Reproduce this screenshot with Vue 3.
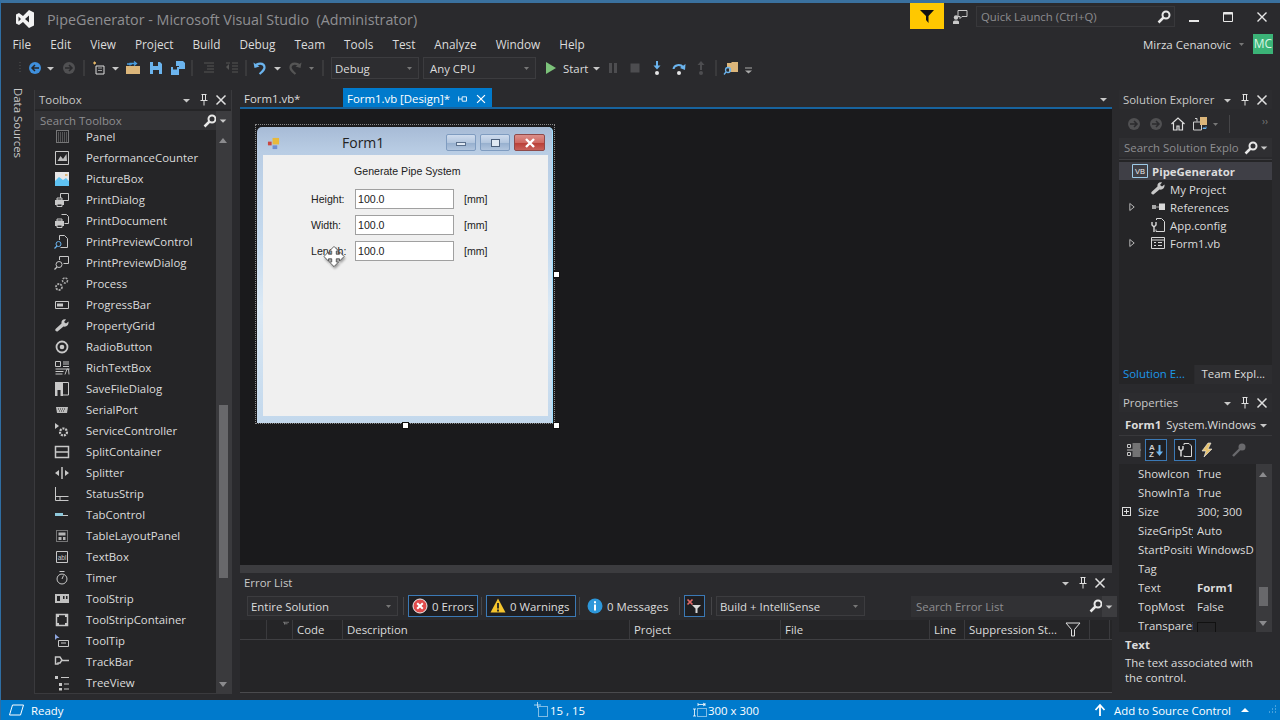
<script setup>
// icon bodies, all on a 16x16 box; stroke and fill come from the .ic rule unless set here
const icons = {
  caret: '<path d="M4 7h7l-3.5 3.5z" fill="#c8c8c8" stroke="none"/>',
  caretDim: '<path d="M5 7h5l-2.5 3z" fill="#777" stroke="none"/>',
  pin: '<path d="M5.5 2.5h5M6.5 2.5v6h3v-6M4.500 8.500h7M8 8.500v5" stroke="#e0e0e0"/>',
  close: '<path d="M3.500 3.500l9 9M12.500 3.500l-9 9" stroke="#e0e0e0" stroke-width="1.500"/>',
  search: '<circle cx="10" cy="6" r="3.500" stroke="#e8e8e8" stroke-width="2"/><path d="M7.500 8.500L2.500 13.500" stroke="#e8e8e8" stroke-width="2.500"/>',
  grip: '<path d="M8 2v12" stroke="#555" stroke-dasharray="1 2"/>',
  sep: '<path d="M8 0v16" stroke="#4a4a4d"/>',
  back: '<circle cx="8" cy="8" r="6" fill="#3f8fdc" stroke="none"/><path d="M12 8H5M8 5L5 8l3 3" stroke="#252526" stroke-width="1.500"/>',
  fwd: '<circle cx="8" cy="8" r="6" fill="#505052" stroke="none"/><path d="M4 8h7M8 5l3 3-3 3" stroke="#2b2b2e" stroke-width="1.500"/>',
  newProj: '<path d="M5 6h8v8H5z" stroke="#ddd"/><path d="M2 3h3M3.500 1.500v3M3 2l1.500 2M4.500 2L3 4" stroke="#e6b866"/><path d="M7 8h4M7 10.500h4" stroke="#999"/>',
  open: '<path d="M1 6h14v8H1z" fill="#dcb67a" stroke="none"/><path d="M2 4h5M9 1.500l2.500 2-2.500 2M11 3.500H5v2" stroke="#4a9ee0" stroke-width="1.300"/>',
  save: '<path d="M2 2h10l2 2v10H2z" fill="#6bb4ee" stroke="none"/><path d="M5 2h5v4H5z" fill="#2b2b2e" stroke="none"/><path d="M5 10h6v4H5z" fill="#2b2b2e" stroke="none"/>',
  saveAll: '<path d="M6 1h7l2 2v6H9V6H6z" fill="#6bb4ee" stroke="none"/><path d="M1 7h8v8H1z" fill="#6bb4ee" stroke="none"/><path d="M3 7h4v2.500H3z" fill="#2b2b2e" stroke="none"/>',
  indent: '<path d="M4 3h10M7 6h7M7 9h7M4 12h10" stroke="#555"/>',
  outdent: '<path d="M2 3h4M8 3h6M8 6h6M8 9h6M8 12h6" stroke="#555"/><path d="M2 7l3-3v6z" fill="#555" stroke="none"/>',
  undo: '<path d="M3.500 6C5 3 12 2.500 12.500 7c.3 3-2 4.500-5 7" stroke="#6bb4ee" stroke-width="2.200"/><path d="M1.500 2.500l1 5.500 5-1.500z" fill="#6bb4ee" stroke="none"/>',
  redo: '<path d="M12.500 6C11 3 4 2.500 3.500 7c-.3 3 2 4.500 5 7" stroke="#555" stroke-width="2.200"/><path d="M14.500 2.500l-1 5.500-5-1.500z" fill="#555" stroke="none"/>',
  play: '<path d="M3 2l10 6-10 6z" fill="#7cc27a" stroke="none"/>',
  pause: '<path d="M4 3h3v10H4zM9 3h3v10H9z" fill="#4d4d50" stroke="none"/>',
  stop: '<path d="M3.500 3.500h9v9h-9z" fill="#4d4d50" stroke="none"/>',
  stepInto: '<circle cx="8" cy="13" r="2" fill="#e6e6e6" stroke="none"/><path d="M8 1v6" stroke="#6bb4ee" stroke-width="2"/><path d="M4.500 5.500L8 9.500l3.500-4z" fill="#6bb4ee" stroke="none"/>',
  stepOver: '<circle cx="8" cy="13" r="2" fill="#e6e6e6" stroke="none"/><path d="M2.500 9C3 4.500 9.500 4 12 7" stroke="#6bb4ee" stroke-width="2"/><path d="M14.500 4l-.5 6-5-2z" fill="#6bb4ee" stroke="none"/>',
  stepOut: '<circle cx="8" cy="13" r="2" fill="#4d4d50" stroke="none"/><path d="M8 10V4" stroke="#4d4d50" stroke-width="2"/><path d="M4.500 5L8 1l3.500 4z" fill="#4d4d50" stroke="none"/>',
  findFiles: '<path d="M4 3h4l1-1h6v10H6V8H4z" fill="#dcb67a" stroke="none"/><circle cx="5" cy="10" r="2.500" stroke="#6bb4ee" stroke-width="1.300"/><path d="M3 12l-2 2.500" stroke="#6bb4ee" stroke-width="1.300"/>',
  overflow: '<path d="M4 8h7" stroke="#aaa"/><path d="M4 10.500h7l-3.500 3z" fill="#aaa" stroke="none"/>',
  // toolbox
  panel: '<path d="M2.500 1.500h12v12h-12z" stroke-dasharray="1 1"/><path d="M4 4h9M4 6h9M4 8h9M4 10h9M4 12h9" stroke="#888" stroke-dasharray="1 1"/>',
  perf: '<path d="M1.500 1.500h13v13h-13z"/><path d="M3.500 11l3-5 2.500 3 3.500-5 .5 7z" fill="#bbb" stroke="none"/>',
  picture: '<path d="M1 1h14v14H1z" fill="#e6e6e6" stroke="none"/><path d="M1 10l4-4 4 3 3-2 3 3v5H1z" fill="#5ec2f2" stroke="none"/><path d="M11 3h2.500v2H11z" fill="#dcb67a" stroke="none"/>',
  printDlg: '<path d="M6.500 1.500h8v7h-5l-1 1h-2z"/><path d="M1 8h9v5H1z" fill="#c8c8c8" stroke="none"/><path d="M3 6h5v2H3zM3 12h5v2.500H3z" fill="#252527" stroke="#c8c8c8"/>',
  printDoc: '<path d="M7.500 1.500h5l2 2v7h-4"/><path d="M1 8h9v5H1z" fill="#c8c8c8" stroke="none"/><path d="M3 6h5v2H3zM3 12h5v2.500H3z" fill="#252527" stroke="#c8c8c8"/>',
  previewCtl: '<path d="M5.500 6V1.500h5l3 3v9h-7"/><circle cx="4.500" cy="10" r="2.500" stroke="#6bb4ee"/><path d="M3 12l-2.500 2.500" stroke="#6bb4ee" stroke-width="1.300"/>',
  previewDlg: '<path d="M5.500 5V1.500h9v7h-5"/><circle cx="5" cy="9.500" r="3"/><path d="M3 12l-2.500 2.500" stroke-width="1.300"/>',
  process: '<circle cx="11" cy="4.500" r="2.500" stroke="#aaa" stroke-width="1.500" stroke-dasharray="2 1"/><circle cx="5" cy="11" r="3" stroke="#aaa" stroke-width="1.800" stroke-dasharray="2 1"/>',
  progress: '<path d="M1.500 4.500h13v7h-13z"/><path d="M3 6.500h6v3H3z" fill="#c8c8c8" stroke="none"/>',
  wrench: '<path d="M14.500 3.500l-2.500 2-2-1.500 2-2.500c-3-.8-5 1.500-4.500 4L1.500 11c-1 1.500 1 3 2.300 2.300L9.500 8.500c2.800.8 5.500-1.500 5-5z" fill="#c8c8c8" stroke="none"/>',
  radio: '<circle cx="8" cy="8" r="5.500" stroke-width="1.800"/><circle cx="8" cy="8" r="2.300" fill="#c8c8c8" stroke="none"/>',
  rich: '<path d="M1.500 1.500h5v5h-5zM9 2h6M9 4h6M9 6.500h6M1.500 9h14M1.500 11.500h8M1.500 14h7"/><path d="M11 14.500L13 9h1.500l.5 5.500" stroke="#bbb"/>',
  saveDlg: '<path d="M1.500 1.500h13v12.500H9"/><path d="M1 1h8v14H1z" fill="#c8c8c8" stroke="none"/><path d="M3.500 9h3v6h-3z" fill="#252527" stroke="none"/>',
  serial: '<path d="M2 5h12l-1 6H3z" fill="#bdbdbd" stroke="none"/><path d="M4 7h8M5 9h6" stroke="#333" stroke-dasharray="1 1"/>',
  service: '<path d="M1 0v6l4-3z" fill="#c8c8c8" stroke="none"/><circle cx="9.500" cy="9" r="3.500" stroke-width="2.200" stroke-dasharray="2 1"/>',
  split: '<path d="M1.500 2.500h13v11h-13zM1.500 8h13" stroke-width="1.500"/>',
  splitter: '<path d="M8 2v12" stroke-width="1.500"/><path d="M1 8l4-3v6zM15 8l-4-3v6z" fill="#c8c8c8" stroke="none"/>',
  strip: '<path d="M1.500 1v13.500h13M1.500 10.500h13M6 10.500v4"/>',
  tab: '<path d="M1 6h8v3H1z" fill="#8fc9dc" stroke="none"/><path d="M9 8.500h5" stroke="#c8c8c8"/>',
  tlp: '<path d="M2.500 2.500h11v11h-11z" stroke-dasharray="1 1"/><path d="M4.500 4.500h7v3h-7zM4.500 9h3v3h-3zM9 9h2.500v3H9z" fill="#b5b5b5" stroke="none"/>',
  textbox: '<path d="M2.500 2.500h11v11h-11z"/><text x="8" y="10.500" font-size="6.500" text-anchor="middle" font-family="Liberation Sans" fill="#c8c8c8" stroke="none">abl</text>',
  timer: '<circle cx="8" cy="9" r="5"/><path d="M5.500 1.500h5M8 9l1.500-3.500"/>',
  toolstrip: '<path d="M1 3h14v9H1z" fill="#c0c0c0" stroke="none"/><path d="M3 5h3v5H3zM9 5h1.500v3H9zM12 5h1.500v3H12z" fill="#252527" stroke="none"/>',
  tsc: '<path d="M2.500 2.500h11v11h-11z" stroke-width="1.500"/><path d="M5 5h6v6H5z" fill="#252527" stroke="none"/><path d="M2 2h3v3H2zM11 2h3v3h-3zM2 11h3v3H2zM11 11h3v3h-3z" fill="#c8c8c8" stroke="none"/>',
  tooltip: '<path d="M1 1l4.500 4H3l-2 2z" fill="#8fa7e0" stroke="none"/><path d="M4.500 7.500h10v6h-10zM7 10h5"/>',
  trackbar: '<path d="M1.500 3h4.500l2 3-2 3H4v1H1.500zM8 6.500h7" stroke-width="1.400"/>',
  tree: '<path d="M1 1h3v3H1zM5 8h3v3H5zM5 13h3v2.500H5z" fill="#c8c8c8" stroke="none"/><path d="M7 2.500h8M10 9h5M10 14h5"/>',
  // solution explorer
  home: '<path d="M1.500 8L8 2l6.500 6M3.500 7v7h3.500v-4h2v4h3.500V7" stroke="#e0e0e0" stroke-width="1.200"/>',
  sync: '<path d="M1.500 6h8v8h-8z" stroke="#d0d0d0"/><path d="M3 2.500h2v3" stroke="#d0d0d0"/><path d="M8 1h7v8H8z" fill="#dcb67a" stroke="none"/><path d="M11 12.500h3v-2M11 12.500l1.500-1.500" stroke="#6bb4ee"/>',
  vb: '<path d="M.500 1.500h15v13H.500z" stroke="#9ecbe8"/><text x="8" y="11" font-size="7.500" text-anchor="middle" font-family="Liberation Sans" fill="#e8e8e8" stroke="none">VB</text>',
  refs: '<path d="M2 6h4v4H2z" fill="#a8a8a8" stroke="none"/><path d="M9 4.500h6v6.500H9z" fill="#d8d8d8" stroke="none"/><path d="M6 8h3" stroke="#aaa"/>',
  config: '<path d="M6.500 3V1.500h5l3 3v10H6v-2" stroke="#d8d8d8"/><path d="M2 5v3l2 2 2-2V5M4 10v5" stroke="#d8d8d8" stroke-width="1.400"/>',
  form: '<path d="M1.500 2.500h13v11h-13zM1.500 5h13" stroke="#d8d8d8"/><path d="M4 7.500h2M8 7.500h4M4 10.500h2M8 10.500h4" stroke="#d8d8d8"/>',
  expand: '<path d="M5.500 4l5 4-5 4z" stroke="#c8c8c8"/>',
  // properties
  categorized: '<path d="M1.500 2.500h3v3h-3zM1.500 10.500h3v3h-3z"/><path d="M6.500 2h8M6.500 4h8M6.500 6h8M1 8h14M6.500 10h8M6.500 12h8M6.500 14h8" stroke="#bbb"/>',
  alpha: '<text x="1" y="7.500" font-size="8" font-weight="700" font-family="Liberation Sans" fill="#d0d0d0" stroke="none">A</text><text x="1" y="15" font-size="8" font-weight="700" font-family="Liberation Sans" fill="#d0d0d0" stroke="none">Z</text><path d="M11.500 3v8" stroke="#6bb4ee" stroke-width="2"/><path d="M8 9.500h7l-3.500 4.500z" fill="#6bb4ee" stroke="none"/>',
  propPage: '<path d="M7 3V1.500h5l2.500 2.500v10.500H7v-1" stroke="#d8d8d8"/><path d="M2 4v3l2 2 2-2V4M4 9v5.500" stroke="#d8d8d8" stroke-width="1.500"/>',
  bolt: '<path d="M9 1L3 9h4l-2 6 8-8H9l3-6z" fill="#e6c26e" stroke="#eee" stroke-width=".6"/>',
  key: '<circle cx="11" cy="5" r="3.500" fill="#6a6a6d" stroke="none"/><path d="M9 7l-7 7" stroke="#6a6a6d" stroke-width="2.400"/>',
  // error list
  err: '<circle cx="8" cy="8" r="7" fill="#e14b4b" stroke="#eee"/><path d="M5.200 5.200l5.600 5.600M10.800 5.200l-5.600 5.600" stroke="#fff" stroke-width="2"/>',
  warn: '<path d="M8 .5L15.500 14.500H.5z" fill="#f6c52d" stroke="none"/><path d="M8 5v5.500M8 11.500v2" stroke="#222" stroke-width="1.800"/>',
  info: '<circle cx="8" cy="8" r="7.500" fill="#2d97da" stroke="none"/><path d="M8 6.500v6M8 3.300v2" stroke="#fff" stroke-width="2"/>',
  filterX: '<path d="M1.500 1.500l5 5M6.500 1.500l-5 5" stroke="#e06a6a" stroke-width="1.700"/><path d="M6 7h9l-3.500 3.500V15h-2v-4.500z" fill="#d8d8d8" stroke="none"/>',
  funnel: '<path d="M1 2h14l-5.500 6.500V15h-3V8.500z" stroke="#e0e0e0"/>',
  sortMark: '<path d="M4 3h8M6 5h4M6 3v3" stroke="#888"/>',
  // chrome
  feedback: '<path d="M6 1.500h9v6H10l-2 2V7.500H6z" stroke="#c8c8c8"/><circle cx="4" cy="8.500" r="2.200" fill="#c8c8c8" stroke="none"/><path d="M1 15v-2.500l1.500-1h3l1.500 1V15z" fill="#c8c8c8" stroke="none"/>',
  winMin: '<path d="M3 12h10" stroke="#e8e8e8" stroke-width="2"/>',
  winMax: '<path d="M3.500 3.500h9v9h-9z" stroke="#e8e8e8"/><path d="M3.500 4.500h9" stroke="#e8e8e8" stroke-width="2"/>',
  winClose: '<path d="M3.500 3.500l9 9M12.500 3.500l-9 9" stroke="#e8e8e8" stroke-width="1.400"/>',
  // status bar
  ready: '<path d="M4.500 3h11l-3 10H1.500z" stroke="#fff"/>',
  pos: '<path d="M0 3h7M3.500 0v6" stroke="#cfe6f7" stroke-width=".8"/><path d="M4.500 4.500h9v10h-9z" stroke="#fff" stroke-dasharray="1 1"/>',
  size: '<path d="M6 1v3M6 2.500h7M13 1v3M11 1l2 1.500L11 4M1 7h3M2.500 7v7M1 14h3" stroke="#fff" stroke-width=".8"/><path d="M5.500 6.500h9v8h-9z" stroke="#fff" stroke-dasharray="1 1"/>',
  up: '<path d="M8 14V4M3.500 8L8 3l4.500 5" stroke="#fff" stroke-width="1.800"/>',
  caretUp: '<path d="M4 10h8L8 6z" fill="#fff" stroke="none"/>',
  resize: '<path d="M13 4h1M10 7h1M13 7h1M7 10h1M10 10h1M13 10h1" stroke="#8fc8ec"/>',
}

// toolbar slots: widths come from the gaps between the icons in the main toolbar
const toolbarLeft = [
  { i: 'grip', w: 12 }, { i: 'back', w: 18 }, { i: 'caret', w: 14 }, { i: 'fwd', w: 22 }, { i: 'sep', w: 8 },
  { i: 'newProj', w: 22 }, { i: 'caret', w: 12 }, { i: 'open', w: 22 }, { i: 'save', w: 24 }, { i: 'saveAll', w: 20 },
  { i: 'sep', w: 8 }, { i: 'indent', w: 24 }, { i: 'outdent', w: 24 }, { i: 'sep', w: 4 }, { i: 'undo', w: 24 },
  { i: 'caret', w: 12 }, { i: 'redo', w: 22 }, { i: 'caretDim', w: 12 }, { i: 'sep', w: 10 },
]
const toolbarRight = [
  { i: 'caret', w: 12 }, { i: 'pause', w: 20 }, { i: 'stop', w: 24 }, { i: 'stepInto', w: 20 }, { i: 'stepOver', w: 24 },
  { i: 'stepOut', w: 20 }, { i: 'sep', w: 10 }, { i: 'findFiles', w: 20 }, { i: 'overflow', w: 16 },
]

const menu = ['File', 'Edit', 'View', 'Project', 'Build', 'Debug', 'Team', 'Tools', 'Test', 'Analyze', 'Window', 'Help']

const toolbox = [
  ['Panel', 'panel'], ['PerformanceCounter', 'perf'], ['PictureBox', 'picture'], ['PrintDialog', 'printDlg'],
  ['PrintDocument', 'printDoc'], ['PrintPreviewControl', 'previewCtl'], ['PrintPreviewDialog', 'previewDlg'],
  ['Process', 'process'], ['ProgressBar', 'progress'], ['PropertyGrid', 'wrench'], ['RadioButton', 'radio'],
  ['RichTextBox', 'rich'], ['SaveFileDialog', 'saveDlg'], ['SerialPort', 'serial'], ['ServiceController', 'service'],
  ['SplitContainer', 'split'], ['Splitter', 'splitter'], ['StatusStrip', 'strip'], ['TabControl', 'tab'],
  ['TableLayoutPanel', 'tlp'], ['TextBox', 'textbox'], ['Timer', 'timer'], ['ToolStrip', 'toolstrip'],
  ['ToolStripContainer', 'tsc'], ['ToolTip', 'tooltip'], ['TrackBar', 'trackbar'], ['TreeView', 'tree'],
]

const tree = [
  { label: 'My Project', icon: 'wrench' },
  { label: 'References', icon: 'refs', expand: true },
  { label: 'App.config', icon: 'config' },
  { label: 'Form1.vb', icon: 'form', expand: true },
]

// names and values as far as the narrow property grid shows them
const props = [
  { name: 'ShowIcon', value: 'True' },
  { name: 'ShowInTa', value: 'True' },
  { name: 'Size', value: '300; 300', plus: true },
  { name: 'SizeGripSty', value: 'Auto' },
  { name: 'StartPositi', value: 'WindowsD' },
  { name: 'Tag', value: '' },
  { name: 'Text', value: 'Form1', bold: true },
  { name: 'TopMost', value: 'False' },
  { name: 'Transparei', value: '', swatch: true },
]

const fields = ['Height:', 'Width:', 'Length:']
const columns = ['', '', 'Code', 'Description', 'Project', 'File', 'Line', 'Suppression St...', '']
</script>

<template>
  <div class="vs">
    <header class="titlebar">
      <svg class="logo" viewBox="0 0 20 20">
        <path d="M14 1l5 2.500v13L14 19 8 13l-4 3-3-1.500v-9L4 4l4 3zM14 6.500L10 10l4 3.500zM3.500 7.500v5L6 10z" fill="#f2f2f2" />
      </svg>
      <span class="app-title">PipeGenerator - Microsoft Visual Studio&nbsp; (Administrator)</span>
      <div class="flag">
        <svg viewBox="0 0 16 16"><path d="M1 2h14L9.500 8v7L7 12V8z" fill="#111" /></svg>
      </div>
      <svg class="ic feedback" viewBox="0 0 16 16" v-html="icons.feedback"></svg>
      <div class="quick">
        <span>Quick Launch (Ctrl+Q)</span>
        <svg class="ic" viewBox="0 0 16 16" v-html="icons.search"></svg>
      </div>
      <div class="win-btns">
        <svg class="ic" viewBox="0 0 16 16" v-html="icons.winMin"></svg>
        <svg class="ic" viewBox="0 0 16 16" v-html="icons.winMax"></svg>
        <svg class="ic" viewBox="0 0 16 16" v-html="icons.winClose"></svg>
      </div>
    </header>

    <nav class="menubar">
      <span v-for="m in menu" :key="m" class="menu-item">{{ m }}</span>
      <span class="user">Mirza Cenanovic</span>
      <svg class="ic user-caret" viewBox="0 0 16 16" v-html="icons.caretDim"></svg>
      <span class="avatar">MC</span>
    </nav>

    <div class="toolbar">
      <span v-for="(t, n) in toolbarLeft" :key="n" class="slot" :style="{ width: t.w + 'px' }">
        <svg class="ic" viewBox="0 0 16 16" v-html="icons[t.i]"></svg>
      </span>
      <div class="combo combo-debug"><span>Debug</span><svg class="ic" viewBox="0 0 16 16" v-html="icons.caretDim"></svg></div>
      <div class="combo combo-cpu"><span>Any CPU</span><svg class="ic" viewBox="0 0 16 16" v-html="icons.caretDim"></svg></div>
      <span class="slot start-icon"><svg class="ic" viewBox="0 0 16 16" v-html="icons.play"></svg></span>
      <span class="start">Start</span>
      <span v-for="(t, n) in toolbarRight" :key="'r' + n" class="slot" :style="{ width: t.w + 'px' }">
        <svg class="ic" viewBox="0 0 16 16" v-html="icons[t.i]"></svg>
      </span>
    </div>

    <main class="workspace">
      <div class="side-strip"><span>Data Sources</span></div>

      <section class="toolbox">
        <div class="tw-head">
          <span class="tw-title">Toolbox</span>
          <span class="dots"></span>
          <svg class="ic" viewBox="0 0 16 16" v-html="icons.caret"></svg>
          <svg class="ic" viewBox="0 0 16 16" v-html="icons.pin"></svg>
          <svg class="ic" viewBox="0 0 16 16" v-html="icons.close"></svg>
        </div>
        <div class="search">
          <span class="search-text">Search Toolbox</span>
          <svg class="ic search-glass" viewBox="0 0 16 16" v-html="icons.search"></svg>
          <svg class="ic search-caret" viewBox="0 0 16 16" v-html="icons.caret"></svg>
        </div>
        <div class="toolbox-body">
          <ul class="toolbox-list">
            <li v-for="[label, icon] in toolbox" :key="label">
              <svg class="ic" viewBox="0 0 16 16" v-html="icons[icon]"></svg>
              <span>{{ label }}</span>
            </li>
          </ul>
          <div class="scroll scroll-toolbox"><i class="arrow-up"></i><b></b><i class="arrow-down"></i></div>
        </div>
      </section>

      <section class="center">
        <div class="tabs">
          <span class="tab">Form1.vb*</span>
          <span class="tab tab-active">
            Form1.vb [Design]*
            <svg class="ic tab-pin" viewBox="0 0 16 16"><path d="M3 5v6M3 8h4M7 5.500h5v5H7z" stroke="#fff" /></svg>
            <svg class="ic" viewBox="0 0 16 16"><path d="M3.500 3.500l9 9M12.500 3.500l-9 9" stroke="#fff" stroke-width="1.400" /></svg>
          </span>
          <svg class="ic tabs-caret" viewBox="0 0 16 16" v-html="icons.caret"></svg>
        </div>

        <div class="designer">
          <div class="selection"></div>
          <div class="form">
            <div class="form-title">
              <svg class="form-icon" viewBox="0 0 14 14">
                <path d="M6 1h7v7H6z" fill="#e8b93a" />
                <path d="M1 5h4v4H1z" fill="#c9473f" />
                <path d="M6 9h5v4H6z" fill="#6f8fd0" />
              </svg>
              <span class="form-name">Form1</span>
              <span class="cap-btn"><i class="cap-min"></i></span>
              <span class="cap-btn"><i class="cap-max"></i></span>
              <span class="cap-btn cap-close">
                <svg viewBox="0 0 16 12"><path d="M4 2l8 8M12 2l-8 8" stroke="#fff" stroke-width="2.400" fill="none" /></svg>
              </span>
            </div>
            <div class="form-client">
              <div class="form-heading">Generate Pipe System</div>
              <div class="form-fields">
                <template v-for="f in fields" :key="f">
                  <label>{{ f }}</label>
                  <span class="win-input">100.0</span>
                  <span>[mm]</span>
                </template>
              </div>
            </div>
          </div>
          <i class="handle h-right"></i>
          <i class="handle h-bottom"></i>
          <i class="handle h-corner"></i>
          <svg class="cursor" viewBox="0 0 24 24">
            <path d="M12 1L17 6H14.500V9.500H18V7L23 12L18 17V14.500H14.500V18H17L12 23L7 18H9.500V14.500H6V17L1 12L6 7V9.500H9.500V6H7Z" fill="#fff" stroke="#555" stroke-width="1" />
          </svg>
        </div>

        <div class="splitter"></div>

        <section class="errors">
          <div class="tw-head err-head">
            <span class="tw-title">Error List</span>
            <span class="dots"></span>
            <svg class="ic" viewBox="0 0 16 16" v-html="icons.caret"></svg>
            <svg class="ic" viewBox="0 0 16 16" v-html="icons.pin"></svg>
            <svg class="ic" viewBox="0 0 16 16" v-html="icons.close"></svg>
          </div>
          <div class="err-tools">
            <div class="combo combo-scope"><span>Entire Solution</span><svg class="ic" viewBox="0 0 16 16" v-html="icons.caretDim"></svg></div>
            <i class="vsep"></i>
            <span class="err-btn on btn-errors"><svg class="ic" viewBox="0 0 16 16" v-html="icons.err"></svg>0 Errors</span>
            <i class="vsep"></i>
            <span class="err-btn on btn-warnings"><svg class="ic" viewBox="0 0 16 16" v-html="icons.warn"></svg>0 Warnings</span>
            <i class="vsep"></i>
            <span class="err-btn btn-messages"><svg class="ic" viewBox="0 0 16 16" v-html="icons.info"></svg>0 Messages</span>
            <i class="vsep"></i>
            <span class="err-btn on btn-filter"><svg class="ic" viewBox="0 0 16 16" v-html="icons.filterX"></svg></span>
            <i class="vsep"></i>
            <div class="combo combo-build"><span>Build + IntelliSense</span><svg class="ic" viewBox="0 0 16 16" v-html="icons.caretDim"></svg></div>
            <div class="search err-search">
              <span class="search-text">Search Error List</span>
              <svg class="ic search-glass" viewBox="0 0 16 16" v-html="icons.search"></svg>
              <svg class="ic search-caret" viewBox="0 0 16 16" v-html="icons.caret"></svg>
            </div>
          </div>
          <div class="err-cols">
            <span v-for="(c, n) in columns" :key="n" class="err-col">
              {{ c }}
              <svg v-if="n === 1" class="ic sort" viewBox="0 0 16 16" v-html="icons.sortMark"></svg>
              <svg v-if="n === 7" class="ic funnel" viewBox="0 0 16 16" v-html="icons.funnel"></svg>
            </span>
          </div>
          <div class="err-empty"></div>
        </section>
      </section>

      <aside class="right">
        <section class="solution">
          <div class="tw-head">
            <span class="tw-title">Solution Explorer</span>
            <span class="grow"></span>
            <svg class="ic" viewBox="0 0 16 16" v-html="icons.caret"></svg>
            <svg class="ic" viewBox="0 0 16 16" v-html="icons.pin"></svg>
            <svg class="ic" viewBox="0 0 16 16" v-html="icons.close"></svg>
          </div>
          <div class="se-tools">
            <svg class="ic" viewBox="0 0 16 16" v-html="icons.fwd"></svg>
            <svg class="ic" viewBox="0 0 16 16" v-html="icons.fwd"></svg>
            <svg class="ic" viewBox="0 0 16 16" v-html="icons.home"></svg>
            <svg class="ic" viewBox="0 0 16 16" v-html="icons.sync"></svg>
            <svg class="ic small" viewBox="0 0 16 16" v-html="icons.caretDim"></svg>
            <i class="vsep"></i>
            <span class="more">&#8250;&#8250;</span>
          </div>
          <div class="search se-search">
            <span class="search-text">Search Solution Explo</span>
            <svg class="ic search-glass" viewBox="0 0 16 16" v-html="icons.search"></svg>
            <svg class="ic search-caret" viewBox="0 0 16 16" v-html="icons.caret"></svg>
          </div>
          <div class="tree">
            <div class="tree-root">
              <svg class="ic" viewBox="0 0 16 16" v-html="icons.vb"></svg>
              <b>PipeGenerator</b>
            </div>
            <div v-for="t in tree" :key="t.label" class="tree-row">
              <svg class="ic tree-arrow" :class="{ hide: !t.expand }" viewBox="0 0 16 16" v-html="icons.expand"></svg>
              <svg class="ic" viewBox="0 0 16 16" v-html="icons[t.icon]"></svg>
              <span>{{ t.label }}</span>
            </div>
          </div>
          <div class="se-tabs">
            <span class="se-tab active">Solution E...</span>
            <span class="se-tab">Team Expl...</span>
          </div>
        </section>

        <section class="properties">
          <div class="tw-head">
            <span class="tw-title">Properties</span>
            <span class="dots"></span>
            <svg class="ic" viewBox="0 0 16 16" v-html="icons.caret"></svg>
            <svg class="ic" viewBox="0 0 16 16" v-html="icons.pin"></svg>
            <svg class="ic" viewBox="0 0 16 16" v-html="icons.close"></svg>
          </div>
          <div class="prop-object">
            <b>Form1</b><span>System.Windows</span>
            <svg class="ic" viewBox="0 0 16 16" v-html="icons.caret"></svg>
          </div>
          <div class="prop-tools">
            <span class="pt"><svg class="ic" viewBox="0 0 16 16" v-html="icons.categorized"></svg></span>
            <span class="pt on"><svg class="ic" viewBox="0 0 16 16" v-html="icons.alpha"></svg></span>
            <i class="vsep"></i>
            <span class="pt on"><svg class="ic" viewBox="0 0 16 16" v-html="icons.propPage"></svg></span>
            <span class="pt"><svg class="ic" viewBox="0 0 16 16" v-html="icons.bolt"></svg></span>
            <i class="vsep hide"></i>
            <span class="pt"><svg class="ic" viewBox="0 0 16 16" v-html="icons.key"></svg></span>
          </div>
          <div class="prop-body">
            <div class="prop-grid">
              <div v-for="p in props" :key="p.name" class="prop-row">
                <span class="gutter"><i v-if="p.plus" class="plus"></i></span>
                <span class="prop-name">{{ p.name }}</span>
                <span class="prop-val" :class="{ bold: p.bold }">{{ p.value }}<i v-if="p.swatch" class="swatch"></i></span>
              </div>
            </div>
            <div class="scroll scroll-props"><i class="arrow-up"></i><b></b><i class="arrow-down"></i></div>
          </div>
          <div class="prop-help">
            <b>Text</b>
            <p>The text associated with the control.</p>
          </div>
        </section>
      </aside>
    </main>

    <footer class="status">
      <span class="st-ready"><svg class="ic" viewBox="0 0 16 16" v-html="icons.ready"></svg>Ready</span>
      <span class="st-pos"><svg class="ic" viewBox="0 0 16 16" v-html="icons.pos"></svg>15 , 15</span>
      <span class="st-size"><svg class="ic" viewBox="0 0 16 16" v-html="icons.size"></svg>300 x 300</span>
      <span class="st-source">
        <svg class="ic" viewBox="0 0 16 16" v-html="icons.up"></svg>
        Add to Source Control
        <svg class="ic" viewBox="0 0 16 16" v-html="icons.caretUp"></svg>
      </span>
      <svg class="ic st-grip" viewBox="0 0 16 16" v-html="icons.resize"></svg>
    </footer>
  </div>
</template>

<style scoped>
.vs {
  position: relative;
  width: 1280px;
  height: 720px;
  box-sizing: border-box;
  overflow: hidden;
  display: flex;
  flex-direction: column;
  padding-left: 2px;
  border-top: 3px solid #3a719f;
  border-left: 1px solid #2f6ea3;
  background: #2a2a2d;
  color: #dcdcdc;
  font-family: 'Open Sans', 'Noto Sans', sans-serif;
  font-size: 11.4px;
}
.ic {
  flex: none;
  width: 16px;
  height: 16px;
  fill: none;
  stroke: #c8c8c8;
  stroke-width: 1;
}
.grow {
  flex: 1;
}
.titlebar {
  height: 29px;
  display: flex;
  align-items: center;
  flex: none;
}
.logo {
  width: 20px;
  height: 20px;
  margin: 3px 0 0 12px;
}
.app-title {
  margin: 3px 0 0 12px;
  font-size: 14.3px;
  color: #8f8f92;
  width: 863px;
  white-space: nowrap;
}
.flag {
  width: 34px;
  height: 26px;
  margin-top: -3px;
  background: #ffc800;
  display: flex;
  align-items: center;
  justify-content: center;
}
.flag svg {
  width: 16px;
  height: 16px;
}
.feedback {
  margin: -2px 0 0 8px;
}
.quick {
  width: 199px;
  height: 21px;
  box-sizing: border-box;
  margin: -2px 0 0 8px;
  display: flex;
  align-items: center;
  justify-content: space-between;
  padding: 0 2px 0 4px;
  background: #2c2c2f;
  border: 1px solid #38383b;
  color: #8c8c8f;
}
.win-btns {
  display: flex;
  gap: 18px;
  margin: -2px 0 0 11px;
}
.menubar {
  height: 24px;
  flex: none;
  display: flex;
  align-items: center;
  padding-left: 0;
}
.menu-item {
  padding: 0 9.5px;
  font-size: 11.8px;
}
.user {
  margin-left: auto;
  font-size: 11.5px;
}
.user-caret {
  margin: 0 3px;
}
.avatar {
  width: 20px;
  height: 20px;
  margin-right: 7px;
  background: #3bb377;
  color: #d8f5e4;
  font-size: 12px;
  line-height: 20px;
  text-align: center;
}
.toolbar {
  height: 24px;
  flex: none;
  display: flex;
  align-items: center;
  padding-left: 11px;
}
.slot {
  flex: none;
  display: flex;
  justify-content: center;
  height: 16px;
  overflow: hidden;
}
.combo {
  flex: none;
  box-sizing: border-box;
  display: flex;
  align-items: center;
  justify-content: space-between;
  background: #2d2d30;
  border: 1px solid #3c3c3f;
  padding-left: 3px;
}
.combo-debug {
  width: 88px;
  height: 22px;
  margin-left: 3px;
}
.combo-cpu {
  width: 113px;
  height: 22px;
  margin-left: 4px;
  padding-left: 6px;
}
.start-icon {
  width: 20px;
  margin-left: 5px;
}
.start {
  width: 28px;
  margin-left: 2px;
}
.workspace {
  flex: 1;
  display: flex;
  margin-top: 8px;
  min-height: 0;
}
.side-strip {
  width: 31px;
  flex: none;
  box-sizing: border-box;
}
.side-strip span {
  display: block;
  writing-mode: vertical-rl;
  margin-left: 8px;
  color: #c8c8c8;
}
.toolbox {
  width: 198px;
  flex: none;
  margin: 2px 8px 6px 0;
  display: flex;
  flex-direction: column;
  border: 1px solid #3a3a3d;
  border-top: 0;
  box-sizing: border-box;
  background: #252527;
}
.tw-head {
  height: 19px;
  flex: none;
  display: flex;
  align-items: center;
  padding: 0 2px 0 4px;
  background: #2c2c2f;
  color: #c8c8c8;
}
.tw-title {
  white-space: nowrap;
}
.tw-head .ic {
  margin-left: 1px;
}
.dots {
  flex: 1;
  height: 4px;
  margin: 0 8px;
  background-image: radial-gradient(#4a4a4d 0.6px, transparent 0.7px);
  background-size: 3px 2px;
}
.search {
  height: 19px;
  flex: none;
  display: flex;
  align-items: center;
  background: #323235;
  padding-left: 5px;
  margin-top: 2px;
}
.search-text {
  flex: 1;
  color: #8e8e91;
  white-space: nowrap;
  overflow: hidden;
}
.search-glass {
  margin-right: -3px;
}
.search-caret {
  width: 15px;
  margin-left: 1px;
  background: #3c3c3f;
  height: 19px;
  box-sizing: border-box;
  padding: 2px 0;
}
.toolbox-body {
  flex: 1;
  display: flex;
  min-height: 0;
  overflow: hidden;
}
.toolbox-list {
  flex: 1;
  list-style: none;
  margin: -4px 0 0;
  padding: 0;
}
.toolbox-list li {
  height: 21px;
  display: flex;
  align-items: center;
  padding-left: 19px;
  white-space: nowrap;
}
.toolbox-list li span {
  margin-left: 16px;
}
.scroll {
  width: 15px;
  flex: none;
  position: relative;
  background: #3a3a3d;
}
.scroll b {
  position: absolute;
  left: 3px;
  width: 9px;
  background: #68686b;
}
.scroll-toolbox b {
  top: 275px;
  height: 173px;
}
.scroll-props b {
  top: 123px;
  height: 19px;
}
.arrow-up,
.arrow-down {
  position: absolute;
  left: 3px;
  width: 0;
  height: 0;
  border-left: 4.500px solid transparent;
  border-right: 4.500px solid transparent;
}
.arrow-up {
  top: 8px;
  border-bottom: 5px solid #8b8b8e;
}
.arrow-down {
  bottom: 6px;
  border-top: 5px solid #8b8b8e;
}
.center {
  width: 872px;
  flex: none;
  display: flex;
  flex-direction: column;
  margin: 0 7px 7px 0;
}
.tabs {
  height: 21px;
  flex: none;
  box-sizing: border-box;
  display: flex;
  align-items: stretch;
  border-bottom: 2px solid #17639e;
}
.tab {
  display: flex;
  align-items: center;
  padding: 2px 4px 0;
  width: 99px;
  box-sizing: border-box;
  margin-right: 4px;
}
.tab-active {
  width: 149px;
  gap: 4px;
  background: #007acc;
  color: #fff;
  white-space: nowrap;
}
.tab-active .ic {
  width: 14px;
  height: 14px;
}
.tab-active .tab-pin {
  margin-left: 2px;
}
.tabs-caret {
  margin: 3px 0 0 auto;
}
.designer {
  flex: 1;
  position: relative;
  background: #1a1a1c;
  min-height: 0;
}
.selection {
  position: absolute;
  left: 15px;
  top: 15px;
  width: 300px;
  height: 300px;
  border: 1px dotted #8a8a8a;
  box-sizing: border-box;
}
.form {
  position: absolute;
  left: 17px;
  top: 18px;
  width: 296px;
  height: 296px;
  box-sizing: border-box;
  display: flex;
  flex-direction: column;
  padding: 0 5px 7px 6px;
  border-radius: 5px 5px 0 0;
  background: linear-gradient(#a7bbd6 0, #b9cde4 25px, #c6dbef 120px, #dbe9f5 180px, #c3d8ec 100%);
  box-shadow: inset -1px 0 0 #9fe0ff;
  color: #222;
  font-family: 'Liberation Sans', sans-serif;
  font-size: 10.6px;
}
.form-title {
  height: 28px;
  box-sizing: border-box;
  padding-top: 3px;
  flex: none;
  display: flex;
  align-items: center;
}
.form-icon {
  width: 13px;
  height: 13px;
  margin: 1px 0 0 4px;
}
.form-name {
  margin-left: 62px;
  width: 104px;
  font-family: 'Open Sans', sans-serif;
  font-size: 14px;
  color: #222;
}
.cap-btn {
  width: 30px;
  height: 17px;
  box-sizing: border-box;
  margin-right: 4px;
  display: flex;
  align-items: center;
  justify-content: center;
  border: 1px solid #7f9cc0;
  border-radius: 2px;
  background: linear-gradient(#cfdcee 0, #b3c6de 50%, #95aecd 51%, #b1c5de 100%);
}
.cap-close {
  width: 31px;
  margin-right: 0;
  border-color: #8f4a4a;
  background: linear-gradient(#dc8f8a 0, #cf6a63 50%, #b93d35 51%, #c8615a 100%);
}
.cap-close svg {
  width: 16px;
  height: 12px;
}
.cap-min {
  width: 10px;
  height: 4px;
  margin-top: 3px;
  background: #dfe8f3;
  border: 1px solid #5a6f8c;
  box-sizing: border-box;
}
.cap-max {
  width: 9px;
  height: 8px;
  background: #dfe8f3;
  border: 1px solid #4a5e7a;
  box-sizing: border-box;
}
.form-client {
  flex: 1;
  background: #f0f0f0;
}
.form-heading {
  margin-top: 9px;
  padding-left: 91px;
  height: 14px;
  line-height: 14px;
  white-space: nowrap;
}
.form-fields {
  display: grid;
  grid-template-columns: 44px 99px auto;
  grid-auto-rows: 20px;
  row-gap: 6px;
  align-items: center;
  margin: 11px 0 0 48px;
}
.form-fields span:nth-child(3n) {
  margin-left: 10px;
}
.win-input {
  height: 20px;
  box-sizing: border-box;
  border: 1px solid #a0a0a0;
  background: #fff;
  padding: 2px 0 0 2px;
  line-height: 14px;
}
.handle {
  position: absolute;
  width: 5px;
  height: 5px;
  background: #fff;
  outline: 1px solid #111;
}
.h-right {
  left: 314px;
  top: 163px;
}
.h-bottom {
  left: 163px;
  top: 314px;
}
.h-corner {
  left: 314px;
  top: 314px;
}
.cursor {
  position: absolute;
  left: 83px;
  top: 136px;
  width: 22px;
  height: 23px;
  filter: drop-shadow(1px 2px 1px rgba(0, 0, 0, 0.35));
}
.splitter {
  height: 8px;
  flex: none;
  background: #3c3c3f;
}
.errors {
  height: 120px;
  flex: none;
  display: flex;
  flex-direction: column;
  background: #252527;
  border-bottom: 1px solid #4a4a4d;
  box-sizing: border-box;
}
.err-head {
  background: #2a2a2d;
  padding: 0 4px;
}
.err-tools {
  height: 28px;
  flex: none;
  display: flex;
  align-items: center;
  background: #2a2a2d;
  padding-left: 7px;
}
.combo-scope {
  width: 151px;
  height: 20px;
  margin-right: 2px;
}
.combo-build {
  width: 149px;
  height: 20px;
}
.vsep {
  flex: none;
  width: 1px;
  height: 18px;
  background: #454548;
  margin: 0 4px 0 3px;
}
.err-btn {
  flex: none;
  height: 22px;
  box-sizing: border-box;
  display: flex;
  align-items: center;
  gap: 4px;
  padding-left: 3px;
  white-space: nowrap;
  border: 1px solid transparent;
}
.err-btn.on {
  border-color: #3b79b5;
  background: #1f1f22;
}
.btn-errors {
  width: 70px;
}
.btn-warnings {
  width: 90px;
}
.btn-messages {
  width: 92px;
  padding-left: 2px;
}
.btn-filter {
  width: 21px;
  padding-left: 1px;
  margin-right: 3px;
}
.err-search {
  width: 201px;
  height: 21px;
  margin: 0 0 0 46px;
  background: #313134;
}
.err-search .search-caret {
  height: 21px;
}
.err-cols {
  height: 20px;
  flex: none;
  display: grid;
  grid-template-columns: 27px 26px 50px 287px 151px 149px 35px 125px 20px;
  border-bottom: 1px solid #3f3f42;
  box-sizing: border-box;
}
.err-col {
  display: flex;
  align-items: center;
  padding-left: 4px;
  position: relative;
  border-right: 1px solid #3a3a3d;
  white-space: nowrap;
  box-sizing: border-box;
}
.sort {
  position: absolute;
  right: 0;
  top: 0;
  width: 12px;
  height: 12px;
}
.funnel {
  position: absolute;
  right: 8px;
  top: 1px;
}
.err-empty {
  flex: 1;
}
.right {
  width: 153px;
  flex: none;
  display: flex;
  flex-direction: column;
  margin-top: 2px;
}
.solution {
  height: 294px;
  flex: none;
  display: flex;
  flex-direction: column;
  background: #2a2a2d;
}
.se-tools {
  height: 27px;
  flex: none;
  display: flex;
  align-items: center;
  padding: 0 0 0 7px;
  gap: 6px;
  margin-top: 1px;
}
.se-tools .small {
  margin-left: -6px;
}
.se-tools .vsep {
  margin: 0 0 0 -1px;
}
.more {
  margin-left: auto;
  margin-right: 4px;
  margin-top: -6px;
  color: #777;
  font-size: 10px;
}
.se-search {
  margin-top: 1px;
  padding-left: 5px;
  background: #2f2f32;
}
.se-search .search-caret,
.prop-object .ic {
  background: none;
}
.tree {
  flex: 1;
  margin-top: 2px;
  padding-top: 2px;
  border-top: 1px solid #3f3f42;
  background: #252527;
}
.tree-root {
  height: 18px;
  display: flex;
  align-items: center;
  gap: 4px;
  padding-left: 13px;
  background: #3f3f46;
  white-space: nowrap;
}
.tree-row {
  height: 18px;
  display: flex;
  align-items: center;
  padding-left: 6px;
  white-space: nowrap;
}
.tree-row .tree-arrow {
  width: 14px;
  height: 14px;
  margin-right: 11px;
}
.tree-row span {
  margin-left: 4px;
}
.tree-arrow.hide {
  visibility: hidden;
}
.se-tabs {
  height: 19px;
  flex: none;
  display: flex;
  gap: 1px;
}
.se-tab {
  flex: 1;
  padding-left: 7px;
  line-height: 18px;
  background: #2d2d30;
  white-space: nowrap;
}
.se-tab.active {
  padding-left: 4px;
  color: #1c97ea;
  background: #252527;
}
.properties {
  flex: 1;
  margin: 9px 0 8px;
  display: flex;
  flex-direction: column;
  min-height: 0;
  background: #2a2a2d;
}
.prop-object {
  height: 19px;
  flex: none;
  margin-top: 3px;
  display: flex;
  align-items: center;
  padding-left: 6px;
  white-space: nowrap;
}
.prop-object span {
  margin-left: 5px;
  width: 91px;
  overflow: hidden;
}
.prop-tools {
  height: 27px;
  flex: none;
  margin-top: 1px;
  display: flex;
  align-items: center;
  padding-left: 4px;
  border-top: 1px solid #38383b;
}
.pt {
  width: 22px;
  height: 22px;
  box-sizing: border-box;
  display: flex;
  align-items: center;
  justify-content: center;
  border: 1px solid transparent;
}
.pt.on {
  border-color: #3b79b5;
  background: #1f1f22;
}
.prop-tools .vsep {
  margin: 0 3px;
  width: 1px;
  background: none;
}
.prop-tools .vsep.hide {
  margin-left: 6px;
}
.prop-body {
  height: 168px;
  flex: none;
  display: flex;
  margin-top: 1px;
  overflow: hidden;
}
.prop-grid {
  flex: 1;
  min-width: 0;
  background: #252527;
}
.prop-row {
  height: 19px;
  display: grid;
  grid-template-columns: 19px 55px auto;
  align-items: center;
  white-space: nowrap;
}
.gutter {
  display: flex;
  padding-left: 3px;
}
.plus {
  width: 9px;
  height: 9px;
  box-sizing: border-box;
  border: 1px solid #ddd;
  background: linear-gradient(#ddd, #ddd) center / 5px 1px no-repeat, linear-gradient(#ddd, #ddd) center / 1px 5px no-repeat;
}
.prop-name {
  overflow: hidden;
}
.prop-val {
  margin-left: 4px;
  width: 59px;
  overflow: hidden;
  position: relative;
  height: 19px;
  line-height: 19px;
}
.prop-val.bold {
  font-weight: 700;
}
.swatch {
  position: absolute;
  left: 0;
  top: 6px;
  width: 19px;
  height: 16px;
  border: 1px solid #111;
  box-sizing: border-box;
}
.scroll-props {
  width: 16px;
}
.prop-help {
  margin-top: 3px;
  padding: 2px 6px;
}
.prop-help b {
  display: block;
  line-height: 15px;
}
.prop-help p {
  margin: 3px 0 0;
  line-height: 15px;
}
.status {
  height: 20px;
  flex: none;
  margin-left: -3px;
  display: grid;
  grid-template-columns: 534px 158px 400px auto;
  align-items: center;
  background: #007acc;
  color: #fff;
  white-space: nowrap;
}
.status span {
  display: flex;
  align-items: center;
}
.st-ready {
  padding-left: 8px;
  gap: 7px;
}
.st-source {
  gap: 6px;
}
.st-grip {
  position: absolute;
  right: 2px;
  bottom: 2px;
}
</style>

<style>
html,
body {
  background: #2a2a2d;
}
</style>
